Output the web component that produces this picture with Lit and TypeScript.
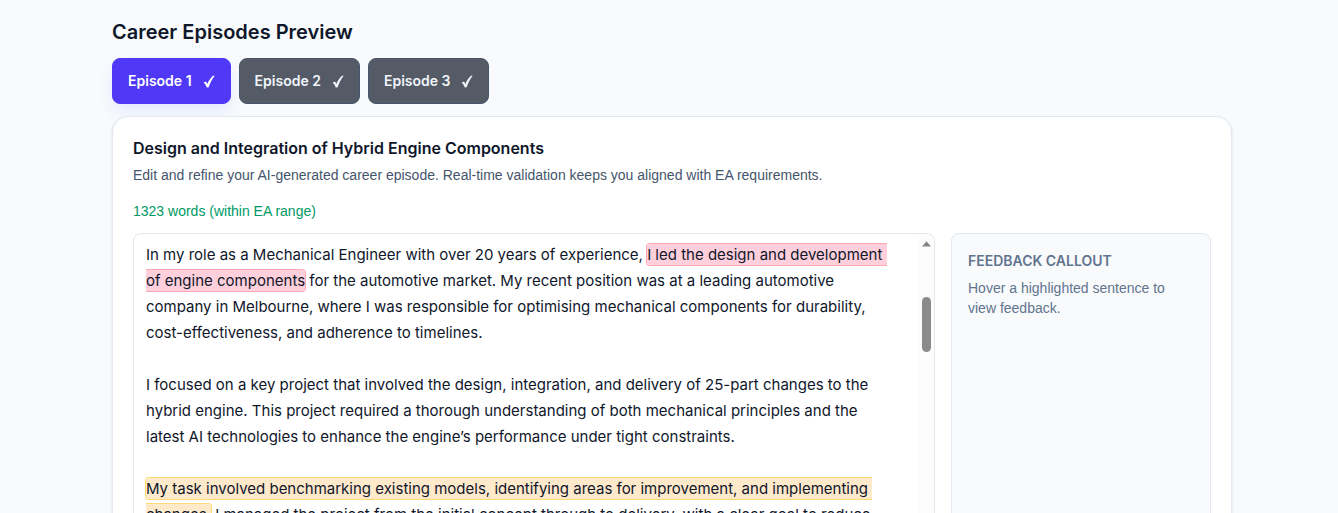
import { LitElement, html, css } from "lit";
import { customElement, state } from "lit/decorators.js";
import { classMap } from "lit/directives/class-map.js";

type Tone = "rose" | "amber";
interface Span {
  text: string;
  tone?: Tone;
}

const EPISODES = ["Episode 1", "Episode 2", "Episode 3"];

const PARAGRAPHS: Span[][] = [
  [
    { text: "In my role as a Mechanical Engineer with over 20 years of experience, " },
    { text: "I led the design and development of engine components", tone: "rose" },
    {
      text: " for the automotive market. My recent position was at a leading automotive company in Melbourne, where I was responsible for optimising mechanical components for durability, cost\u2060-\u2060effectiveness, and adherence to timelines.",
    },
  ],
  [
    {
      text: "I focused on a key project that involved the design, integration, and delivery of 25-part changes to the hybrid engine. This project required a thorough understanding of both mechanical principles and the latest AI technologies to enhance the engine’s performance under tight constraints.",
    },
  ],
  [
    {
      text: "My task involved benchmarking existing models, identifying areas for improvement, and implementing changes.",
      tone: "amber",
    },
    { text: " I managed the project from the initial concept through to delivery, with a clear goal to reduce" },
  ],
];

@customElement("episode-editor")
export class EpisodeEditor extends LitElement {
  static styles = css`
    :host {
      display: flex;
      min-width: 0;
      height: 480px;
      box-sizing: border-box;
      border: 1px solid #e2e8f0;
      border-radius: 8px;
      overflow: hidden;
      background: #fff;
    }
    .text {
      flex: 1;
      min-width: 0;
      box-sizing: border-box;
      padding: 8px 24px 8px 12px;
      overflow: hidden;
      outline: none;
      font-size: 15px;
      line-height: 26px;
      color: #0f172b;
    }
    .para {
      margin: 0 0 26px;
      white-space: pre-wrap;
    }
    .mark {
      padding: 1px 0;
      border-radius: 3px;
      background: none;
      color: inherit;
    }
    .rose {
      background: #ffd0db;
      box-shadow: 0 0 0 1px #ffa8b5;
    }
    .amber {
      background: #ffe9cb;
      box-shadow: 0 0 0 1px #ffda72;
    }
    .track {
      width: 15px;
      display: flex;
      flex-direction: column;
      align-items: center;
      gap: 50px;
      padding-top: 7px;
      box-sizing: border-box;
      background: #fcfcfc;
    }
    .arrow {
      display: block;
    }
    .thumb {
      width: 9px;
      height: 55px;
      border-radius: 5px;
      background: #8b8b8b;
    }
  `;

  render() {
    return html`
      <div class="text" role="textbox" aria-multiline="true" aria-label="Career episode text" contenteditable="true" spellcheck="false">${PARAGRAPHS.map(
        (p) =>
          html`<p class="para">${p.map((s) =>
            s.tone
              ? html`<mark class=${classMap({ mark: true, [s.tone]: true })}>${s.text}</mark>`
              : s.text
          )}</p>`
      )}</div>
      <div class="track" aria-hidden="true">
        <svg class="arrow" width="9" height="6" viewBox="0 0 9 6"><path d="M4.5 0.3 9 5.5H0z" fill="#858585" /></svg>
        <div class="thumb"></div>
      </div>
    `;
  }
}

@customElement("app-root")
export class AppRoot extends LitElement {
  @state() private active = 0;

  static styles = css`
    :host {
      display: block;
      height: 100vh;
      overflow: hidden;
      box-sizing: border-box;
      padding: 18px 106px 0 112px;
      background: #f8fafc;
      color: #0f172b;
      font-family: Inter, "Liberation Sans", sans-serif;
    }
    .heading {
      margin: 0;
      font-size: 20px;
      line-height: 28px;
      font-weight: 600;
    }
    .tabs {
      display: flex;
      gap: 8px;
      margin: 12px 0;
    }
    .tab {
      display: flex;
      align-items: center;
      gap: 11px;
      height: 46px;
      padding: 0 15px;
      border: 1px solid #45556c;
      border-radius: 8px;
      background: #545b67;
      color: #f1f5f9;
      font: inherit;
      font-size: 14px;
      line-height: 20px;
      font-weight: 600;
      cursor: pointer;
    }
    .active {
      border-color: #4f39f6;
      background: #4f39f6;
      color: #fff;
      box-shadow: 0 8px 16px -2px #e0e7ff;
    }
    .card {
      position: relative;
      padding: 20px;
      border: 1px solid #e2e8f0;
      border-radius: 16px;
      background: #fff;
      box-shadow: 0 1px 3px rgba(0, 0, 0, 0.1);
    }
    .title {
      margin: 0;
      font-size: 16px;
      line-height: 22px;
      font-weight: 600;
    }
    .sub {
      margin: 6px 0 16px;
      font-family: "Liberation Sans", Arial, sans-serif;
      font-size: 14px;
      line-height: 20px;
      color: #45556c;
    }
    .count {
      margin: 0 0 12px;
      font-family: "Liberation Sans", Arial, sans-serif;
      font-size: 14px;
      line-height: 20px;
      color: #009966;
    }
    .columns {
      display: grid;
      grid-template-columns: minmax(0, 1fr) 260px;
      gap: 16px;
    }
    .callout {
      padding: 16px;
      border: 1px solid #e2e8f0;
      border-radius: 8px;
      background: #f8fafc;
      font-size: 14px;
      line-height: 20px;
      color: #62748e;
    }
    .label {
      margin: 0 0 6px;
      font-size: 14px;
      line-height: 22px;
      font-weight: 600;
    }
    .hint {
      margin: 0;
      font-family: "Liberation Sans", Arial, sans-serif;
    }
  `;

  render() {
    return html`
      <h1 class="heading">Career Episodes Preview</h1>
      <nav class="tabs">
        ${EPISODES.map(
          (name, i) => html`<button
            type="button"
            class=${classMap({ tab: true, active: i === this.active })}
            @click=${() => (this.active = i)}
          >
            <span>${name}</span>
            <svg width="12" height="13" viewBox="0 0 12 13" aria-hidden="true">
              <path d="M0.6 7.8Q2 6.300 3.400 7.100L4.300 8.900C5.800 5.400 7.700 2.600 10.400 0.500L11.600 0.900C9.300 3.800 7.100 7.800 5.700 12.200L3.700 12.500C3.100 10.600 2.200 8.600 0.600 7.800Z" fill="currentColor" />
            </svg>
          </button>`
        )}
      </nav>
      <section class="card">
        <h2 class="title">Design and Integration of Hybrid Engine Components</h2>
        <p class="sub">Edit and refine your AI-generated career episode. Real-time validation keeps you aligned with EA requirements.</p>
        <p class="count">1323 words (within EA range)</p>
        <div class="columns">
          <episode-editor></episode-editor>
          <aside class="callout">
            <h3 class="label">FEEDBACK CALLOUT</h3>
            <p class="hint">Hover a highlighted sentence to view feedback.</p>
          </aside>
        </div>
      </section>
    `;
  }
}
